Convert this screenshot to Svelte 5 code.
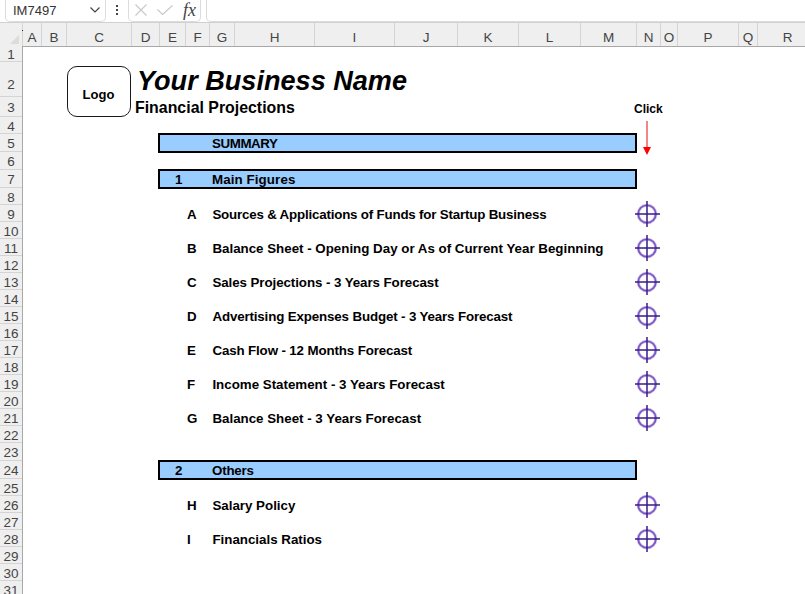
<script>
  const cols = [
    ["A", 19], ["B", 25], ["C", 65], ["D", 28], ["E", 26], ["F", 24], ["G", 25], ["H", 80],
    ["I", 80], ["J", 63], ["K", 61], ["L", 62], ["M", 56], ["N", 24], ["O", 17], ["P", 61],
    ["Q", 19], ["R", 60],
  ];

  // row heights in px, index 0 is row 1
  const rowHeights = [
    16, 35, 20, 17, 18, 18, 18, 17, 17, 17, 17, 17, 17, 17, 17, 17, 17, 17, 17, 17, 17, 17, 18, 18, 17,
    17, 17, 17, 17, 17, 17,
  ];

  // spacing: tightening so the line widths match the sheet's hinted text
  const mainItems = [
    { row: 9, letter: "A", label: "Sources & Applications of Funds for Startup Business", spacing: -0.19 },
    { row: 11, letter: "B", label: "Balance Sheet - Opening Day or As of Current Year Beginning", spacing: 0 },
    { row: 13, letter: "C", label: "Sales Projections - 3 Years Forecast", spacing: -0.07 },
    { row: 15, letter: "D", label: "Advertising Expenses Budget - 3 Years Forecast", spacing: -0.14 },
    { row: 17, letter: "E", label: "Cash Flow - 12 Months Forecast", spacing: -0.13 },
    { row: 19, letter: "F", label: "Income Statement - 3 Years Forecast", spacing: 0 },
    { row: 21, letter: "G", label: "Balance Sheet - 3 Years Forecast", spacing: 0 },
    { row: 26, letter: "H", label: "Salary Policy", spacing: 0 },
    { row: 28, letter: "I", label: "Financials Ratios", spacing: 0 },
  ];

  const bands = [
    { row: 5, num: "", label: "SUMMARY", spacing: -0.4 },
    { row: 7, num: "1", label: "Main Figures", spacing: 0.1 },
    { row: 24, num: "2", label: "Others", spacing: -0.2 },
  ];

  const colTemplate = cols.map((c) => c[1] + "px").join(" ");
  const rowTemplate = rowHeights.map((h) => h + "px").join(" ");
</script>

<div class="app">
  <div class="formula-bar">
    <div class="name-box">
      <span>IM7497</span>
      <svg width="10" height="6" viewBox="0 0 10 6"><path d="M0.5 0.5 L5 5 L9.5 0.5" fill="none" stroke="#444" stroke-width="1.2" /></svg>
    </div>
    <div class="kebab"><i></i><i></i><i></i></div>
    <div class="fx-box">
      <svg width="12" height="12" viewBox="0 0 12 12"><path d="M0.5 0.5 L11.5 11.5 M11.5 0.5 L0.5 11.5" stroke="#c8c8c8" stroke-width="1.1" fill="none" /></svg>
      <svg width="16" height="10" viewBox="0 0 16 10"><path d="M0.5 4.5 L5.5 9.5 L15.5 0.5" stroke="#c8c8c8" stroke-width="1.1" fill="none" /></svg>
      <span class="fx">fx</span>
    </div>
    <div class="formula-input"></div>
  </div>

  <div class="col-header">
    <div class="corner"><svg width="9" height="9" viewBox="0 0 9 9"><path d="M9 0 V9 H0 Z" fill="#dcdcdc" /></svg></div>
    {#each cols as [name, w]}
      <div class="col" style="width: {w}px">{name}</div>
    {/each}
  </div>

  <div class="body">
    <div class="row-header">
      {#each rowHeights as h, i}
        <div class="rh" class:tall={h > 30} style="height: {h}px">{i + 1}</div>
      {/each}
    </div>

    <div class="sheet" style="grid-template-columns: {colTemplate}; grid-template-rows: {rowTemplate}">
      <div class="logo">Logo</div>
      <div class="biz-name">Your Business Name</div>
      <div class="subtitle">Financial Projections</div>
      <div class="click">Click</div>
      <svg class="arrow" width="10" height="35" viewBox="0 0 10 35">
        <path d="M5 0 V27" stroke="#e01010" stroke-width="1" fill="none" />
        <path d="M1 26 H9 L5 34 Z" fill="#f00" />
      </svg>

      {#each bands as b}
        <div class="band" style="grid-row: {b.row}">
          <span class="band-num">{b.num}</span>
          <span style="letter-spacing: {b.spacing}px">{b.label}</span>
        </div>
      {/each}

      {#each mainItems as item}
        <div class="letter" style="grid-row: {item.row}">{item.letter}</div>
        <div class="label" style="grid-row: {item.row}; letter-spacing: {item.spacing}px">{item.label}</div>
        <div class="target" style="grid-row: {item.row}">
          <svg width="27" height="27" viewBox="0 0 27 27">
            <circle cx="13" cy="13" r="8.8" fill="#fff" stroke="#c2b0e6" stroke-width="3" />
            <circle cx="13" cy="13" r="8.8" fill="none" stroke="#7a58c0" stroke-width="1.6" />
            <path d="M13 0 V26 M1 13 H26" stroke="#3a1a8c" stroke-width="1.5" fill="none" />
          </svg>
        </div>
      {/each}
    </div>
  </div>
</div>

<style>
  :global(body) {
    margin: 0;
    background: #fff;
  }

  .app {
    width: 805px;
    height: 594px;
    overflow: hidden;
    font-family: "Liberation Sans", Arial, sans-serif;
    color: #000;
    background: #fff;
  }

  .formula-bar {
    display: flex;
    height: 22px;
    align-items: flex-end;
    background: #fff;
  }

  .name-box {
    box-sizing: border-box;
    display: flex;
    align-items: center;
    justify-content: space-between;
    width: 101px;
    height: 23px;
    margin-left: 5px;
    padding: 0 5px 0 7px;
    border: 1px solid #dcdcdc;
    border-top: 0;
    border-radius: 0 0 5px 5px;
    font-size: 13px;
    color: #333;
  }

  .kebab {
    display: flex;
    flex-direction: column;
    align-items: center;
    gap: 2px;
    width: 22px;
    padding-bottom: 7px;
  }

  .kebab i {
    width: 2px;
    height: 2px;
    background: #444;
  }

  .fx-box {
    box-sizing: border-box;
    display: flex;
    align-items: center;
    width: 73px;
    height: 23px;
    padding-left: 6px;
    border: 1px solid #dcdcdc;
    border-top: 0;
    border-radius: 0 0 5px 5px;
  }

  .fx-box svg:nth-child(2) {
    margin: 0 10px;
  }

  .fx {
    font-family: "Liberation Serif", serif;
    font-style: italic;
    font-size: 18px;
    line-height: 20px;
    color: #444;
  }

  .formula-input {
    flex: 1;
    height: 23px;
    margin-left: 5px;
    box-sizing: border-box;
    border: 1px solid #dcdcdc;
    border-top: 0;
    border-right: 0;
    border-radius: 0 0 0 5px;
  }

  .col-header {
    display: flex;
    height: 25px;
    box-sizing: border-box;
    border-top: 1px solid #d0d0d0;
    border-bottom: 1px solid #a8a8a8;
    background: #efefef;
  }

  .corner {
    box-sizing: border-box;
    position: relative;
    display: flex;
    align-items: flex-end;
    justify-content: flex-end;
    width: 23px;
    flex: none;
    padding: 0 3px 2px 0;
    border-right: 1px solid #d4d4d4;
  }

  .corner::after {
    content: "";
    position: absolute;
    right: -1px;
    top: 7px;
    width: 1px;
    height: 1px;
    background: #222;
  }

  .col {
    box-sizing: border-box;
    flex: none;
    padding-top: 7px;
    border-right: 1px solid #d4d4d4;
    text-align: center;
    font-size: 13.5px;
    line-height: 15px;
    color: #444;
  }

  .body {
    display: flex;
    margin-top: -1px;
  }

  .row-header {
    box-sizing: border-box;
    flex: none;
    width: 23px;
    background: #efefef;
    border-right: 1px solid #a8a8a8;
  }

  .rh {
    box-sizing: border-box;
    display: flex;
    align-items: center;
    justify-content: center;
    padding-top: 2px;
    border-bottom: 1px solid #d4d4d4;
    font-size: 13.5px;
    line-height: 15px;
    color: #444;
  }

  .rh.tall {
    padding-top: 11px;
  }

  .sheet {
    display: grid;
    position: relative;
  }

  .logo {
    position: absolute;
    left: 44px;
    top: 20px;
    box-sizing: border-box;
    display: flex;
    align-items: center;
    justify-content: center;
    width: 64px;
    height: 51px;
    border: 1px solid #1a1a1a;
    border-radius: 10px;
    background: #fff;
    font-size: 13px;
    font-weight: bold;
    padding: 6px 1px 0 0;
  }

  .biz-name {
    grid-row: 2;
    grid-column: 4 / 12;
    align-self: end;
    margin-left: 5px;
    font-size: 27.1px;
    line-height: 32px;
    font-weight: bold;
    font-style: italic;
    white-space: nowrap;
  }

  .subtitle {
    grid-row: 3;
    grid-column: 4 / 12;
    align-self: end;
    margin-left: 3px;
    font-size: 15.9px;
    line-height: 18px;
    font-weight: bold;
    white-space: nowrap;
  }

  .click {
    grid-row: 3;
    grid-column: 14 / 16;
    align-self: end;
    margin: 0 0 1px -3px;
    font-size: 12px;
    line-height: 14px;
    font-weight: bold;
  }

  .arrow {
    position: absolute;
    left: 619px;
    top: 75px;
  }

  .band {
    grid-column: 5 / 14;
    display: flex;
    align-items: center;
    box-sizing: border-box;
    height: 20px;
    margin-left: -2px;
    margin-top: -1px;
    border: 2px solid #000;
    background: #99ccff;
    font-size: 13.33px;
    font-weight: bold;
    white-space: nowrap;
  }

  .band-num {
    flex: none;
    width: 52px;
    padding-left: 15px;
    box-sizing: border-box;
  }

  .letter {
    grid-column: 6;
    align-self: center;
    margin: 1px 0 0 1px;
    font-size: 13.33px;
    font-weight: bold;
  }

  .label {
    grid-column: 7 / 14;
    align-self: center;
    margin: 1px 0 0 2.4px;
    font-size: 13.33px;
    font-weight: bold;
    white-space: nowrap;
  }

  .target {
    grid-column: 14;
    position: relative;
    height: 17px;
  }

  .target svg {
    position: absolute;
    left: -3px;
    top: -4px;
  }
</style>
